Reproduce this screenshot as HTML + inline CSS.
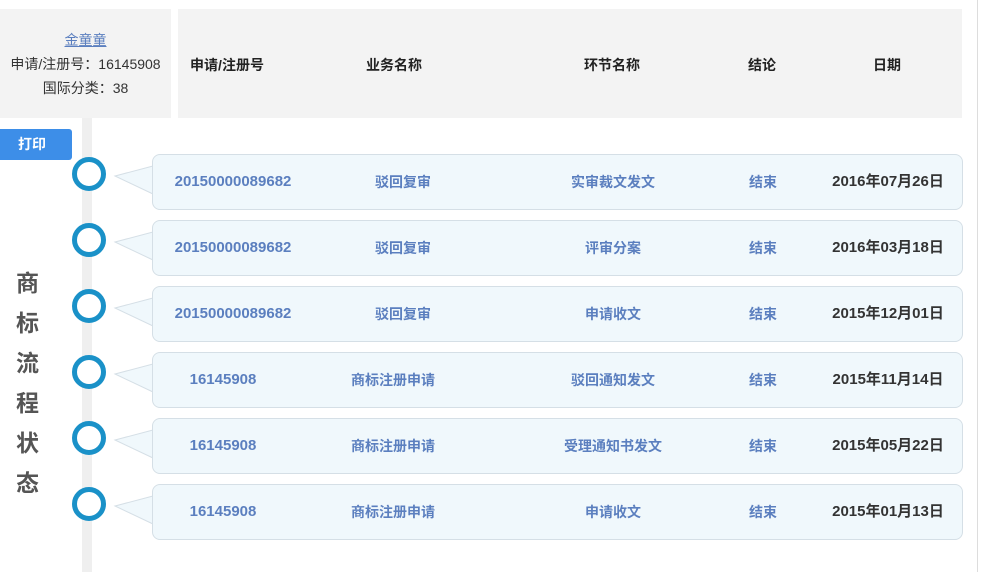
<!DOCTYPE html>
<html><head><meta charset="utf-8"><style>
body{margin:0;width:988px;height:572px;background:#fff;position:relative;overflow:hidden;font-family:"Liberation Sans","Noto Sans CJK SC",sans-serif;}
.a{position:absolute}
.hl{left:0;top:9px;width:171px;height:109px;background:#f3f3f3;text-align:center;font-size:14px;color:#333;line-height:24px;padding-top:19px;box-sizing:border-box}
.hl u{color:#5b7fbf}
.hr{left:178px;top:9px;width:784px;height:109px;background:#f3f3f3;font-size:14px;font-weight:bold;color:#222}
.c{position:absolute;transform:translateX(-50%);white-space:nowrap}
.btn{left:0;top:129px;width:72px;height:31px;background:#3d8ee8;color:#fff;font-weight:bold;font-size:14px;line-height:31px;padding-left:18px;box-sizing:border-box;border-radius:0 3px 3px 0}
.bar{left:82px;top:118px;width:10px;height:454px;background:#efefef}
.row{left:152px;width:809px;height:54px;border:1px solid #d5dfe6;border-radius:8px;background:#f0f8fc;font-size:14px;font-weight:bold;color:#5b7fbf}
.row .c{top:0;line-height:54px}
.row .n{font-size:15px}
.circ{left:72px;width:24px;height:24px;border:5px solid #1a91c8;border-radius:50%;background:#fff}
.vt{left:16px;font-size:23px;font-weight:bold;color:#555}
.line{left:977px;top:0;width:1px;height:572px;background:#ddd}
</style></head><body>
<div class="a line"></div>
<div class="a hl"><u>金童童</u><br>申请/注册号：16145908<br>国际分类：38</div>
<div class="a hr">
<span class="c" style="left:49px;top:46px">申请/注册号</span>
<span class="c" style="left:216px;top:46px">业务名称</span>
<span class="c" style="left:434px;top:46px">环节名称</span>
<span class="c" style="left:584px;top:46px">结论</span>
<span class="c" style="left:709px;top:46px">日期</span>
</div>
<div class="a btn">打印</div>
<div class="a bar"></div>
<div class="a vt" style="top:264px">商</div>
<div class="a vt" style="top:304px">标</div>
<div class="a vt" style="top:344px">流</div>
<div class="a vt" style="top:384px">程</div>
<div class="a vt" style="top:424px">状</div>
<div class="a vt" style="top:464px">态</div>
<svg class="a" style="left:0;top:0" width="988" height="572">
<g fill="#f0f8fc" stroke="#d5dfe6">
<path d="M153 166 L115 176 L153 194"/><path d="M153 232 L115 242 L153 260"/><path d="M153 298 L115 308 L153 326"/><path d="M153 364 L115 374 L153 392"/><path d="M153 430 L115 440 L153 458"/><path d="M153 496 L115 506 L153 524"/>
</g></svg>
<div class="a row" style="top:154px"><span class="c n" style="left:80px">20150000089682</span><span class="c" style="left:250px">驳回复审</span><span class="c" style="left:460px">实审裁文发文</span><span class="c" style="left:610px">结束</span><span class="c n" style="left:735px;color:#333">2016年07月26日</span></div>
<div class="a row" style="top:220px"><span class="c n" style="left:80px">20150000089682</span><span class="c" style="left:250px">驳回复审</span><span class="c" style="left:460px">评审分案</span><span class="c" style="left:610px">结束</span><span class="c n" style="left:735px;color:#333">2016年03月18日</span></div>
<div class="a row" style="top:286px"><span class="c n" style="left:80px">20150000089682</span><span class="c" style="left:250px">驳回复审</span><span class="c" style="left:460px">申请收文</span><span class="c" style="left:610px">结束</span><span class="c n" style="left:735px;color:#333">2015年12月01日</span></div>
<div class="a row" style="top:352px"><span class="c n" style="left:70px">16145908</span><span class="c" style="left:240px">商标注册申请</span><span class="c" style="left:460px">驳回通知发文</span><span class="c" style="left:610px">结束</span><span class="c n" style="left:735px;color:#333">2015年11月14日</span></div>
<div class="a row" style="top:418px"><span class="c n" style="left:70px">16145908</span><span class="c" style="left:240px">商标注册申请</span><span class="c" style="left:460px">受理通知书发文</span><span class="c" style="left:610px">结束</span><span class="c n" style="left:735px;color:#333">2015年05月22日</span></div>
<div class="a row" style="top:484px"><span class="c n" style="left:70px">16145908</span><span class="c" style="left:240px">商标注册申请</span><span class="c" style="left:460px">申请收文</span><span class="c" style="left:610px">结束</span><span class="c n" style="left:735px;color:#333">2015年01月13日</span></div>
<div class="a circ" style="top:157px"></div>
<div class="a circ" style="top:223px"></div>
<div class="a circ" style="top:289px"></div>
<div class="a circ" style="top:355px"></div>
<div class="a circ" style="top:421px"></div>
<div class="a circ" style="top:487px"></div>
</body></html>
